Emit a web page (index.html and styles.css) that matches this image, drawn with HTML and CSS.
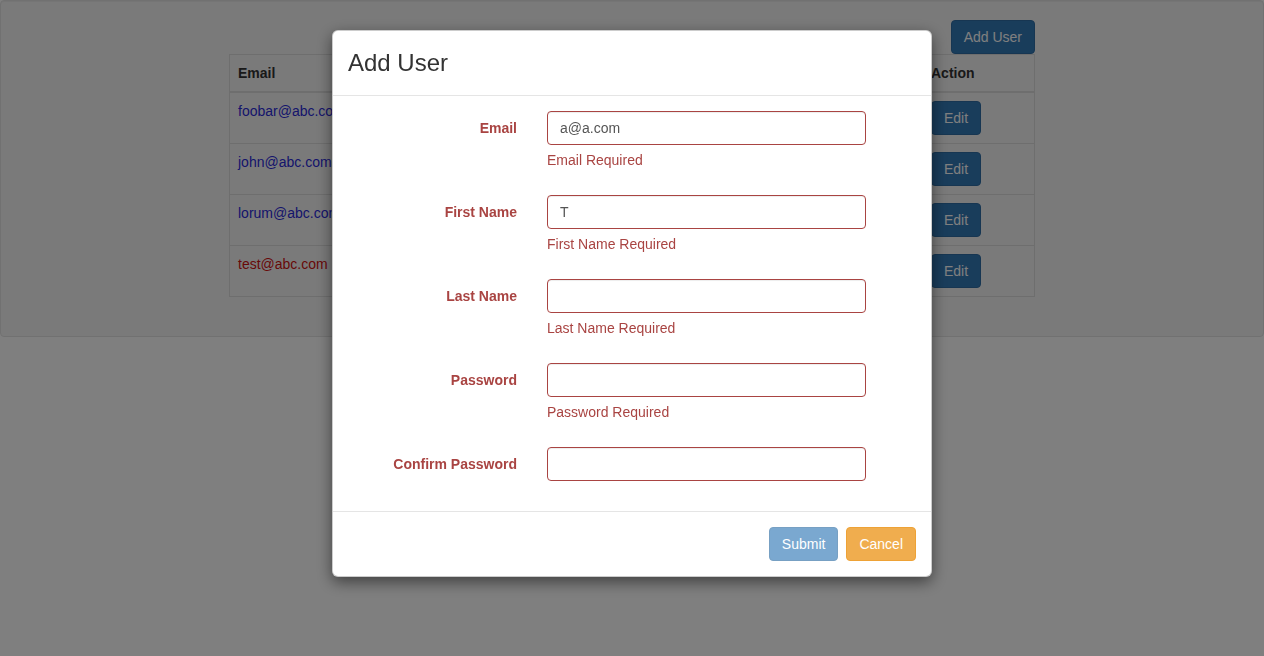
FILE: index.html
```html
<!DOCTYPE html>
<html>
<head>
<meta charset="utf-8">
<title>Users</title>
<link rel="stylesheet" href="styles.css">
</head>
<body>
<div class="well">
  <div class="users">
    <div class="toolbar">
      <button class="btn btn-primary">Add User</button>
    </div>
    <table class="table">
      <colgroup>
        <col class="c-email">
        <col class="c-first">
        <col class="c-last">
        <col class="c-action">
      </colgroup>
      <thead>
        <tr><th>Email</th><th>First Name</th><th>Last Name</th><th>Action</th></tr>
      </thead>
      <tbody>
        <tr><td class="mail">foobar@abc.com</td><td></td><td></td><td><button class="btn btn-primary">Edit</button></td></tr>
        <tr><td class="mail">john@abc.com</td><td></td><td></td><td><button class="btn btn-primary">Edit</button></td></tr>
        <tr><td class="mail">lorum@abc.com</td><td></td><td></td><td><button class="btn btn-primary">Edit</button></td></tr>
        <tr><td class="mail mail-red">test@abc.com</td><td></td><td></td><td><button class="btn btn-primary">Edit</button></td></tr>
      </tbody>
    </table>
  </div>
</div>

<div class="backdrop"></div>

<div class="modal">
  <div class="modal-content">
    <div class="modal-header">
      <h3 class="modal-title">Add User</h3>
    </div>
    <div class="modal-body">
      <div class="form-group">
        <label class="control-label">Email</label>
        <div class="field">
          <input class="form-control" type="text" value="a@a.com">
          <span class="help-block">Email Required</span>
        </div>
      </div>
      <div class="form-group">
        <label class="control-label">First Name</label>
        <div class="field">
          <input class="form-control" type="text" value="T">
          <span class="help-block">First Name Required</span>
        </div>
      </div>
      <div class="form-group">
        <label class="control-label">Last Name</label>
        <div class="field">
          <input class="form-control" type="text" value="">
          <span class="help-block">Last Name Required</span>
        </div>
      </div>
      <div class="form-group">
        <label class="control-label">Password</label>
        <div class="field">
          <input class="form-control" type="password" value="">
          <span class="help-block">Password Required</span>
        </div>
      </div>
      <div class="form-group">
        <label class="control-label">Confirm Password</label>
        <div class="field">
          <input class="form-control" type="password" value="">
        </div>
      </div>
    </div>
    <div class="modal-footer">
      <button class="btn btn-primary disabled">Submit</button>
      <button class="btn btn-warning">Cancel</button>
    </div>
  </div>
</div>
</body>
</html>
```

FILE: styles.css
```css
* { box-sizing: border-box; }

html, body {
  margin: 0;
  padding: 0;
  height: 100%;
}

body {
  font-family: "Liberation Sans", Arial, sans-serif;
  font-size: 14px;
  line-height: 20px;
  color: #333;
  background: #fff;
  overflow: hidden;
}

.well {
  background: #f5f5f5;
  border: 1px solid #e3e3e3;
  border-radius: 4px;
  box-shadow: inset 0 1px 1px rgba(0,0,0,.05);
  padding: 19px;
}

.users {
  width: 806px;
  margin: 0 auto;
}

.toolbar {
  display: flex;
  justify-content: flex-end;
}

.btn {
  display: inline-block;
  font-family: inherit;
  font-size: 14px;
  line-height: 20px;
  padding: 6px 12px;
  border: 1px solid transparent;
  border-radius: 4px;
  cursor: pointer;
  height: 34px;
}

.btn-primary {
  color: #fff;
  background: #337ab7;
  border-color: #2e6da4;
}

.btn-primary.disabled {
  opacity: .65;
}

.btn-warning {
  color: #fff;
  background: #f0ad4e;
  border-color: #eea236;
}

.table {
  width: 805px;
  border-collapse: collapse;
  border-spacing: 0;
  table-layout: fixed;
  border: 1px solid #ddd;
  margin-bottom: 20px;
}

.c-email { width: 230px; }
.c-first { width: 230px; }
.c-last { width: 233px; }
.c-action { width: 112px; }

.table th,
.table td {
  border: 1px solid #ddd;
  padding: 8px;
  text-align: left;
  vertical-align: top;
  white-space: nowrap;
  overflow: hidden;
}

.table thead th {
  border-bottom-width: 2px;
  font-weight: bold;
  vertical-align: bottom;
}

.mail { color: #2a2ad8; }
.mail-red { color: #d01010; }

.backdrop {
  position: fixed;
  inset: 0;
  background: rgba(0,0,0,.5);
}

.modal {
  position: fixed;
  inset: 0;
  display: flex;
  justify-content: center;
  align-items: flex-start;
  padding-top: 30px;
}

.modal-content {
  width: 600px;
  background: #fff;
  border: 1px solid rgba(0,0,0,.2);
  border-radius: 6px;
  box-shadow: 0 5px 15px rgba(0,0,0,.5);
}

.modal-header {
  padding: 15px;
  border-bottom: 1px solid #e5e5e5;
}

.modal-title {
  margin: 0;
  font-size: 24px;
  font-weight: 500;
  line-height: 34px;
  color: #333;
}

.modal-body {
  padding: 15px 0;
}

.form-group {
  display: flex;
  margin-bottom: 15px;
}

.control-label {
  width: 199px;
  flex: none;
  padding: 7px 15px 0;
  text-align: right;
  font-weight: bold;
  color: #a94442;
}

.field {
  width: 349px;
  flex: none;
  padding: 0 15px;
}

.form-control {
  display: block;
  width: 100%;
  height: 34px;
  padding: 6px 12px;
  font-family: inherit;
  font-size: 14px;
  line-height: 20px;
  color: #555;
  background: #fff;
  border: 1px solid #a94442;
  border-radius: 4px;
  box-shadow: inset 0 1px 1px rgba(0,0,0,.075);
  outline: none;
}

.help-block {
  display: block;
  margin-top: 5px;
  margin-bottom: 10px;
  color: #a94442;
}

.modal-footer {
  padding: 15px;
  border-top: 1px solid #e5e5e5;
  display: flex;
  justify-content: flex-end;
  gap: 8px;
}
```
